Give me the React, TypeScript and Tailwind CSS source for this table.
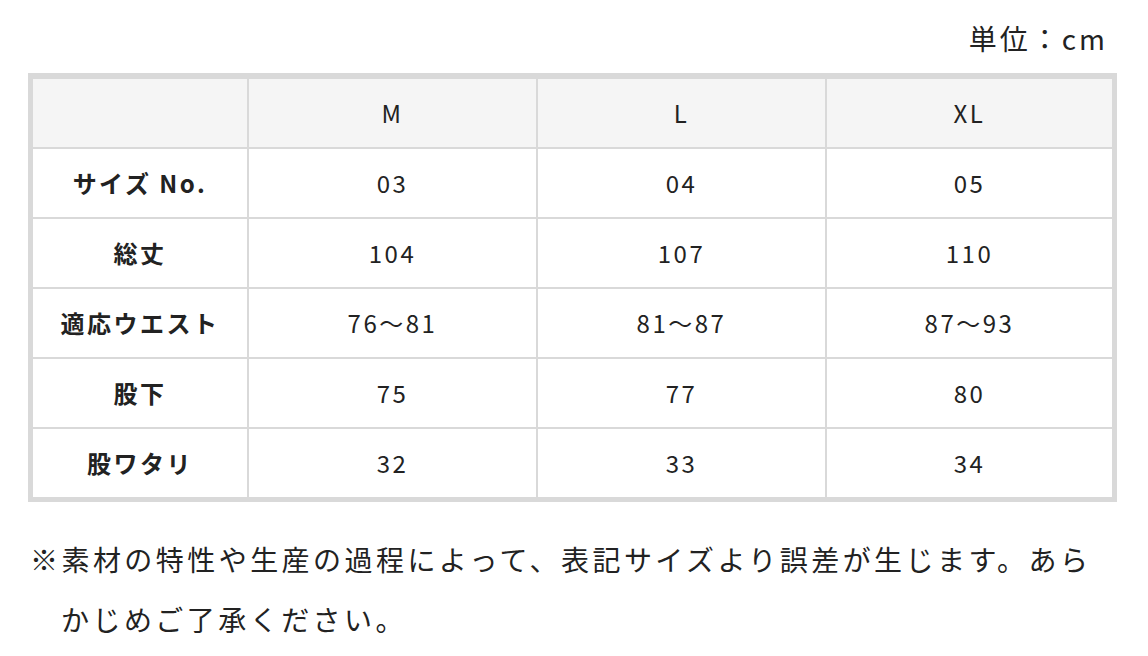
import React from "react";

const cols = ["M", "L", "XL"];
const rows: { label: string; values: string[] }[] = [
  { label: "サイズ No.", values: ["03", "04", "05"] },
  { label: "総丈", values: ["104", "107", "110"] },
  { label: "適応ウエスト", values: ["76〜81", "81〜87", "87〜93"] },
  { label: "股下", values: ["75", "77", "80"] },
  { label: "股ワタリ", values: ["32", "33", "34"] },
];

export default function App() {
  return (
    <div className="w-[1148px] h-[656px] bg-white text-[#222] font-['Noto_Sans_CJK_JP','Noto_Sans',sans-serif]">
      <div className="flex justify-end pr-[40px] pt-[18px] h-[73px]">
        <p className="text-[28px] leading-[40px] tracking-[3px]">単位：cm</p>
      </div>
      <div className="ml-[28px] w-[1089px] bg-[#d9d9d9] px-[5px] pt-[6px] pb-[5px]">
        <div className="grid grid-cols-[214px_287px_287px_285px] gap-[2px] text-[24px] tracking-[2.5px]">
          <div className="h-[68px] bg-[#f5f5f5]" />
          {cols.map((c) => (
            <div key={c} className="h-[68px] bg-[#f5f5f5] flex items-center justify-center">
              {c}
            </div>
          ))}
          {rows.map((r) => (
            <React.Fragment key={r.label}>
              <div className="h-[68px] bg-white flex items-center justify-center font-bold">
                {r.label}
              </div>
              {r.values.map((v, i) => (
                <div key={i} className="h-[68px] bg-white flex items-center justify-center">
                  {v}
                </div>
              ))}
            </React.Fragment>
          ))}
        </div>
      </div>
      <p className="mt-[27px] ml-[30px] pl-[31px] [text-indent:-31px] text-[28px] leading-[60px] tracking-[3.45px] whitespace-nowrap">
        ※素材の特性や生産の過程によって、表記サイズより誤差が生じます。あら
        <br />
        かじめご了承ください。
      </p>
    </div>
  );
}
